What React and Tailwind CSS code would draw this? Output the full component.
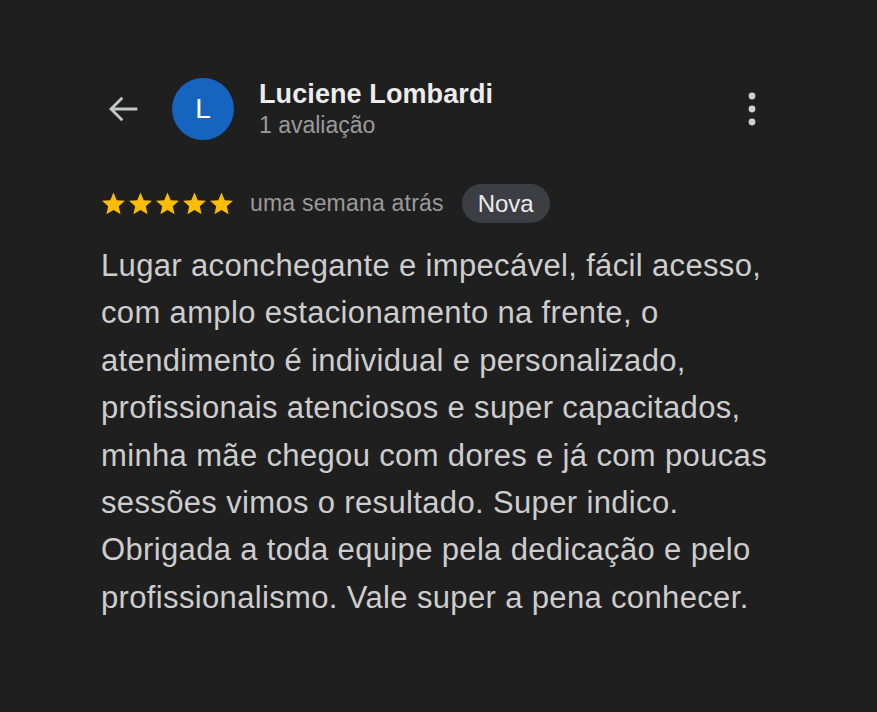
import React from "react";

const lines = [
  "Lugar aconchegante e impecável, fácil acesso,",
  "com amplo estacionamento na frente, o",
  "atendimento é individual e personalizado,",
  "profissionais atenciosos e super capacitados,",
  "minha mãe chegou com dores e já com poucas",
  "sessões vimos o resultado. Super indico.",
  "Obrigada a toda equipe pela dedicação e pelo",
  "profissionalismo. Vale super a pena conhecer.",
];

const Star = () => (
  <svg width="27" height="27" viewBox="0 0 24 24">
    <path
      fill="#fbbc04"
      d="M12 2.3l2.9 6.7 7.3.6-5.5 4.8 1.6 7.1-6.3-3.8-6.3 3.8 1.6-7.1-5.5-4.8 7.3-.6z"
    />
  </svg>
);

export default function App() {
  return (
    <div
      className="w-[877px] h-[712px] bg-[#1f1f1f] overflow-hidden"
      style={{ fontFamily: "'Liberation Sans', Arial, sans-serif" }}
    >
      <div className="pt-[78px] pl-[104px] pr-[112px] flex items-center">
        <svg width="40" height="40" viewBox="0 0 24 24" className="text-[#c4c7c5]">
          <path
            fill="none"
            stroke="currentColor"
            strokeWidth="1.7"
            d="M20 12H4.5M11 5.2L4.2 12l6.8 6.8"
          />
        </svg>
        <div className="ml-[28px] w-[62px] h-[62px] rounded-full bg-[#1565c0] flex items-center justify-center text-white text-[28px]">
          L
        </div>
        <div className="ml-[25px] flex-1 -mt-[2px]">
          <div className="text-[27px] font-bold text-[#ececec] leading-[32px] tracking-[0.1px]">
            Luciene Lombardi
          </div>
          <div className="mt-[2px] text-[23px] text-[#9a9a9a] leading-[26px]">1 avaliação</div>
        </div>
        <svg width="8" height="34" viewBox="0 0 8 34" className="mr-[9px]">
          <circle cx="4" cy="4" r="3.4" fill="#cfcfcf" />
          <circle cx="4" cy="17" r="3.4" fill="#cfcfcf" />
          <circle cx="4" cy="30" r="3.4" fill="#cfcfcf" />
        </svg>
      </div>

      <div className="mt-[44px] pl-[100px] flex items-center">
        <div className="flex">
          <Star />
          <Star />
          <Star />
          <Star />
          <Star />
        </div>
        <span className="ml-[15px] text-[23px] tracking-[0.2px] text-[#9a9a9a]">uma semana atrás</span>
        <span className="ml-[18px] h-[39px] px-[16px] rounded-full bg-[#3c3e44] text-[#ececec] text-[24px] flex items-center">
          Nova
        </span>
      </div>

      <div className="mt-[19px] pl-[101px] text-[31px] leading-[47.4px] tracking-[0.35px] text-[#cdcdcd]">
        {lines.map((l, i) => (
          <div key={i}>{l}</div>
        ))}
      </div>
    </div>
  );
}
